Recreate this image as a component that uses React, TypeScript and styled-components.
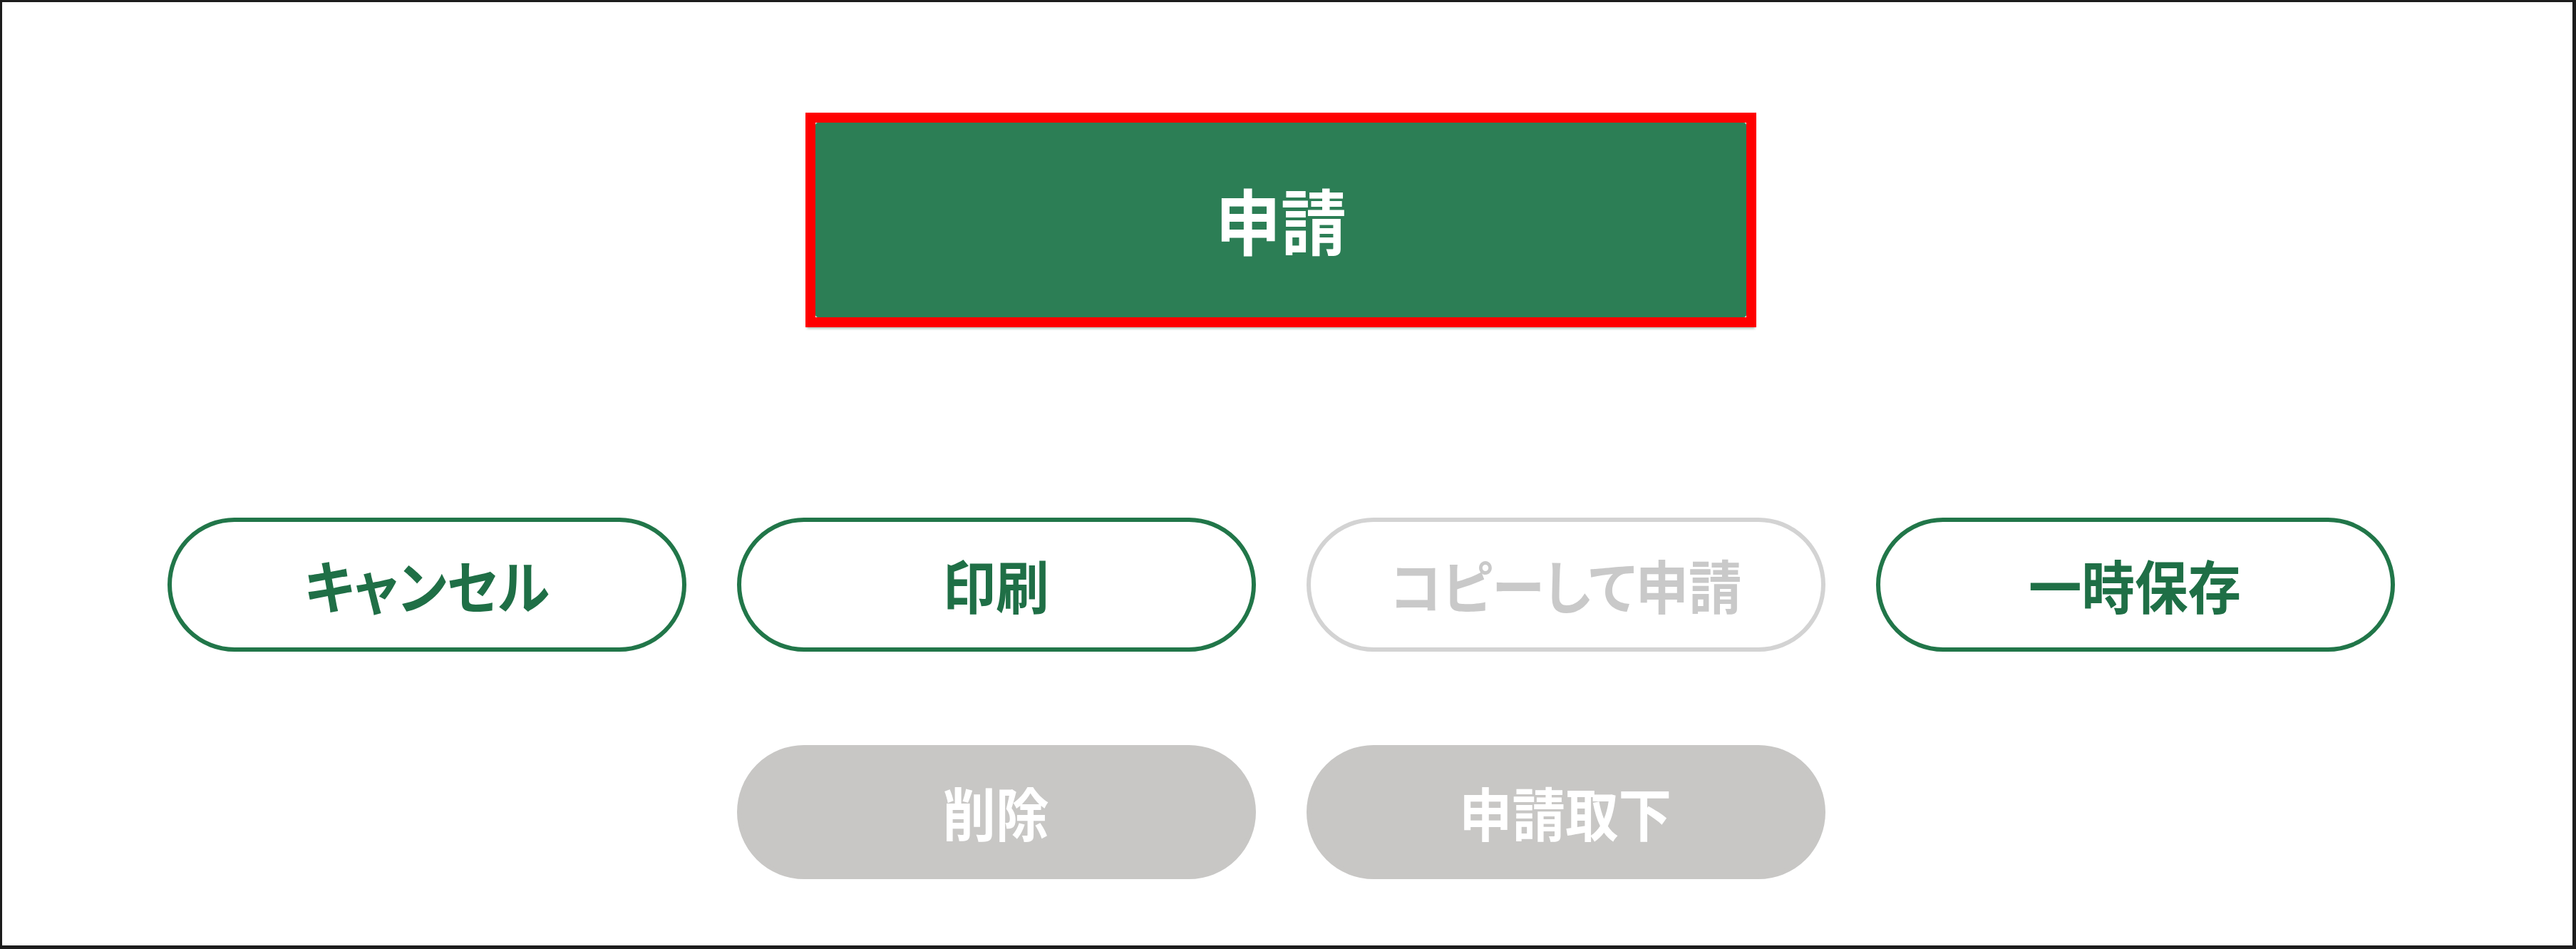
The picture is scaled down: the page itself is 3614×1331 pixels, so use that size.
import styled, { createGlobalStyle } from "styled-components";

const GlobalStyle = createGlobalStyle`
  body {
    margin: 0;
    background: #ffffff;
    font-family: "Noto Sans CJK JP", "Noto Sans", sans-serif;
  }
`;

const Screen = styled.div`
  box-sizing: border-box;
  height: 1331px;
  border-style: solid;
  border-color: #1c1c1c;
  border-width: 3px 5px 5px 3px;
  padding: 155px 18px 0 0;
  display: flex;
  flex-direction: column;
  align-items: center;
`;

// red annotation frame drawn round the main button
const Highlight = styled.div`
  border: 14px solid #ff0000;
  box-shadow: 0 4px 3px -2px rgba(30, 90, 60, 0.35);
`;

// the source UI font is a narrow one, so squeeze the glyphs a little
const Label = styled.span`
  display: inline-block;
  transform: scaleX(0.92);
  white-space: nowrap;
`;

const SubmitButton = styled.button`
  display: flex;
  align-items: center;
  justify-content: center;
  width: 1306px;
  height: 273px;
  border: none;
  border-radius: 4px;
  background: #2c7e55;
  color: #ffffff;
  font-family: inherit;
  font-size: 100px;
  font-weight: 700;
  line-height: 1;
  padding: 0 0 4px;
`;

const ActionGrid = styled.div`
  display: grid;
  grid-template-columns: repeat(4, 728px);
  column-gap: 71px;
  row-gap: 131px;
  margin-top: 267px;
`;

type Variant = "outline" | "disabled" | "muted";

interface IPill {
  $variant: Variant;
  $col?: number;
}

const PillButton = styled.button<IPill>`
  grid-column: ${(p) => (p.$col ? p.$col : "auto")};
  display: flex;
  align-items: center;
  justify-content: center;
  height: 188px;
  border-radius: 94px;
  box-sizing: border-box;
  border: 6px solid
    ${(p) =>
      p.$variant === "outline"
        ? "#217649"
        : p.$variant === "disabled"
        ? "#d3d3d3"
        : "#c8c7c5"};
  background: ${(p) => (p.$variant === "muted" ? "#c8c7c5" : "#ffffff")};
  color: ${(p) =>
    p.$variant === "outline"
      ? "#1f6f46"
      : p.$variant === "disabled"
      ? "#c9c9c9"
      : "#ffffff"};
  font-family: inherit;
  font-size: 81px;
  font-weight: 700;
  font-feature-settings: "palt";
  line-height: 1;
  padding: 0 0 4px;
`;

const actions: { label: string; variant: Variant; col?: number }[] = [
  { label: "キャンセル", variant: "outline" },
  { label: "印刷", variant: "outline" },
  { label: "コピーして申請", variant: "disabled" },
  { label: "一時保存", variant: "outline" },
  { label: "削除", variant: "muted", col: 2 },
  { label: "申請取下", variant: "muted", col: 3 },
];

function App() {
  return (
    <>
      <GlobalStyle />
      <Screen>
        <Highlight>
          <SubmitButton>
            <Label>申請</Label>
          </SubmitButton>
        </Highlight>
        <ActionGrid>
          {actions.map((a) => (
            <PillButton key={a.label} $variant={a.variant} $col={a.col}>
              <Label>{a.label}</Label>
            </PillButton>
          ))}
        </ActionGrid>
      </Screen>
    </>
  );
}

export default App;
